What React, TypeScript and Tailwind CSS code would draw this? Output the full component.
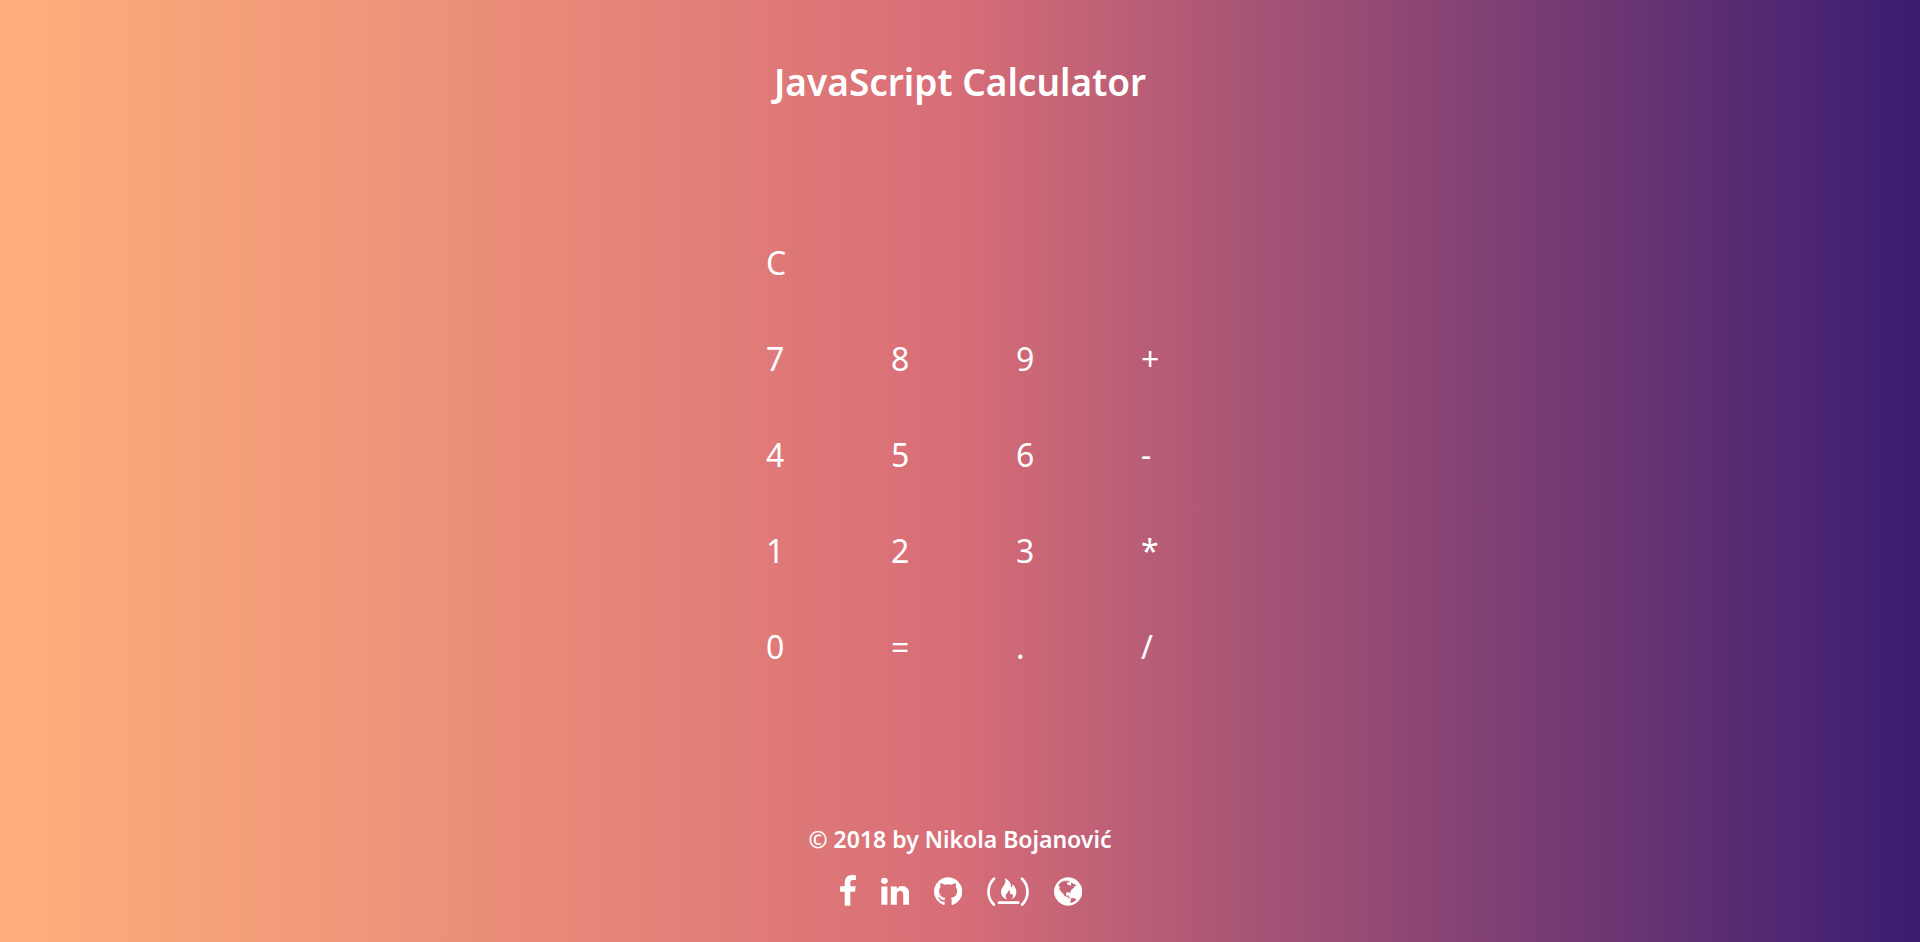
import type { ReactNode } from "react";

const keys = ["7", "8", "9", "+", "4", "5", "6", "-", "1", "2", "3", "*", "0", "=", ".", "/"];

const facebook =
  "M1343 12v264h-157q-86 0-116 36t-30 108v189h293l-39 296h-254v759h-306v-759h-255v-296h255v-218q0-186 104-288.5t277-102.5q147 0 228 12z";
const linkedin =
  "M477 625v991h-330v-991h330zm21-306q1 73-50.5 122t-135.5 49h-2q-82 0-132-49t-50-122q0-74 51.5-122.5t134.5-48.5 133 48.5 51 122.5zm1166 729v568h-329v-530q0-105-40.5-164.5t-126.5-59.5q-63 0-105.5 34.5t-63.5 85.5q-11 30-11 81v553h-329q2-399 2-647t-1-296l-1-48h329v144h-2q20-32 41-56t56.5-52 87-43.5 114.5-15.5q171 0 275 113.5t104 332.5z";
const github =
  "M896 128q209 0 385.5 103t279.5 279.5 103 385.5q0 251-146.5 451.5t-378.5 277.5q-27 5-40-7t-13-30q0-3 .5-76.5t.5-134.5q0-97-52-142 57-6 102.5-18t94-39 81-66.5 53-105 20.5-150.5q0-119-79-206 37-91-8-204-28-9-81 11t-92 44l-38 24q-93-26-192-26t-192 26q-16-11-42.5-27t-83.5-38.5-85-13.5q-45 113-8 204-79 87-79 206 0 85 20.5 150t52.5 105 80.5 67 94 39 102.5 18q-39 36-49 103-21 10-45 15t-57 5-65.5-21.5-55.5-62.5q-19-32-48.5-52t-49.5-24l-20-3q-21 0-29 4.5t-5 11.5 9 14 13 12l7 5q22 10 43.5 38t31.5 51l10 23q13 38 44 61.5t67 30 69.5 7 55.5-3.5l23-4q0 38 .5 88.5t.5 54.5q0 18-13 30t-40 7q-232-77-378.5-277.5t-146.5-451.5q0-209 103-385.5t279.5-279.5 385.5-103z";
const globe =
  "M896 128q209 0 385.5 103t279.5 279.5 103 385.5-103 385.5-279.5 279.5-385.5 103-385.5-103-279.5-279.5-103-385.5 103-385.5 279.5-279.5 385.5-103zm274 521q-2 1-9.5 9.5t-13.5 9.5q2 0 4.5-5t5-11 3.5-7q6-7 22-15 14-6 52-12 34-8 51 11-2-2 9.5-13t14.5-12q3-2 15-4.5t15-7.5l2-22q-12 1-17.5-7t-6.5-21q0 2-6 8 0-7-4.5-8t-11.5 1-9 1q-10-3-15-7.5t-8-16.5-4-15q-2-5-9.5-11t-9.5-10q-1-2-2.5-5.5t-3-6.5-4-5.5-5.5-2.5-7 5-7.5 10-4.5 5q-3-2-6-1.5t-4.5 1-4.5 3-5 3.5q-3 2-8.5 3t-8.5 2q15-5-1-11-10-4-16-3 9-4 7.5-12t-8.5-14h5q-1-4-8.5-8.5t-17.5-8.5-13-6q-8-5-34-9.5t-33-.5q-5 6-4.5 10.5t4 14 3.5 12.5q1 6-5.5 13t-6.5 12q0 7 14 15.5t10 21.5q-3 8-16 16t-16 12q-5 8-1.5 18.5t10.5 16.5q2 2 1.5 4t-3.5 4.5-5.5 4-6.5 3.5l-3 2q-11 5-20.5-6t-13.5-26q-7-25-16-30-23-8-29 1-5-13-41-26-25-9-58-4 6-1 0-15-7-15-19-12 3-6 4-17.5t1-13.5q3-13 12-23 1-1 7-8.5t9.5-13.5.5-6q35 4 50-11 5-5 11.5-17t10.5-17q9-6 14-5.5t14.5 5.5 14.5 5q14 1 15.5-11t-7.5-20q12 1 3-17-4-7-8-9-12-4-27 5-8 4 2 8-1-1-9.5 10.5t-16.5 17.5-16-5q-1-1-5.5-13.5t-9.5-13.5q-8 0-16 15 3-8-11-15t-24-8q19-12-8-27-7-4-20.5-5t-19.5 4q-5 7-5.5 11.5t5 8 10.5 5.5 11.5 4 8.5 3q14 10 8 14-2 1-8.5 3.5t-11.5 4.5-6 4q-3 4 0 14t-2 14q-5-5-9-17.5t-7-16.5q7 9-25 6l-10-1q-4 0-16 2t-20.5 1-13.5-8q-4-8 0-20 1-4 4-2-4-3-11-9.5t-10-8.5q-46 15-94 41 6 1 12-1 5-2 13-6.5t10-5.5q34-14 42-7l5-5q14 16 20 25-7-4-30-1-20 6-22 12 7 12 5 18-4-3-11.5-10t-14.5-11-15-5q-16 0-22 1-146 80-235 222 7 7 12 8 4 1 5 9t2.5 11 11.5-3q9 8 3 19 1-1 44 27 19 17 21 21 3 11-10 18-1-2-9-9t-9-4q-3 5 .5 18.5t10.5 12.5q-7 0-9.5 16t-2.5 35.5-1 23.5l2 1q-3 12 5.5 34.5t21.5 19.5q-13 3 20 43 6 8 8 9 3 2 12 7.5t15 10 10 10.5q4 5 10 22.5t14 23.5q-2 6 9.5 20t10.5 23q-1 0-2.5 1t-2.5 1q3 7 15.5 14t15.5 13q1 3 2 10t3 11 8 2q2-20-24-62-15-25-17-29-3-5-5.5-15.5t-4.5-14.5q2 0 6 1.5t8.5 3.5 7.5 4 2 3q-3 7 2 17.5t12 18.5 17 19 12 13q6 6 14 19.5t0 13.5q9 0 20 10t17 20q5 8 8 26t5 24q2 7 8.5 13.5t12.5 9.5l16 8 13 7q5 2 18.5 10.5t21.5 11.5q10 4 16 4t14.5-2.5 13.5-3.5q15-2 29 15t21 21q36 19 55 11-2 1 .5 7.5t8 15.5 9 14.5 5.5 8.5q5 6 18 15t18 15q6-4 7-9-3 8 7 20t18 10q14-3 14-32-31 15-49-18 0-1-2.5-5.5t-4-8.5-2.5-8.5 0-7.5 5-3q9 0 10-3.5t-2-12.5-4-13q-1-8-11-20t-12-15q-5 9-16 8t-16-9q0 1-1.5 5.5t-1.5 6.5q-13 0-15-1 1-3 2.5-17.5t3.5-22.5q1-4 5.5-12t7.5-14.5 4-12.5-4.5-9.5-17.5-2.5q-19 1-26 20-1 3-3 10.5t-5 11.5-9 7q-7 3-24 2t-24-5q-13-8-22.5-29t-9.5-37q0-10 2.5-26.5t3-25-5.5-24.5q3-2 9-9.5t10-10.5q2-1 4.5-1.5t4.5 0 4-1.5 3-6q-1-1-4-3-3-3-4-3 7 3 28.5-1.5t27.5 1.5q15 11 22-2 0-1-2.5-9.5t-.5-13.5q5 27 29 9 3 3 15.5 5t17.5 5q3 2 7 5.5t5.5 4.5 5-.5 8.5-6.5q10 14 12 24 11 40 19 44 7 3 11 2t4.5-9.5 0-14-1.5-12.5l-1-8v-18l-1-8q-15-3-18.5-12t1.5-18.5 15-18.5q1-1 8-3.5t15.5-6.5 12.5-8q21-19 15-35 7 0 11-9-1 0-5-3t-7.5-5-4.5-2q9-5 2-16 5-3 7.5-11t7.5-10q9 12 21 2 7-8 1-16 5-7 20.5-10.5t18.5-9.5q7 2 8-2t1-12 3-12q4-5 15-9t13-5l17-11q3-4 0-4 18 2 31-11 10-11-6-20 3-6-3-9.5t-15-5.5q3-1 11.5-.5t10.5-1.5q15-10-7-16-17-5-43 12zm-163 877q206-36 351-189-3-3-12.5-4.5t-12.5-3.5q-18-7-24-8 1-7-2.5-13t-8-9-12.5-8-11-7q-2-2-7-6t-7-5.5-7.5-4.5-8.5-2-10 1l-3 1q-3 1-5.5 2.5t-5.5 3-4 3 0 2.5q-21-17-36-22-5-1-11-5.5t-10.5-7-10-1.5-11.5 7q-5 5-6 15t-2 13q-7-5 0-17.5t2-18.5q-3-6-10.5-4.5t-12 4.5-11.5 8.5-9 6.5-8.5 5.5-8.5 7.5q-3 4-6 12t-5 11q-2-4-11.5-6.5t-9.5-5.5q2 10 4 35t5 38q7 31-12 48-27 25-29 40-4 22 12 26 0 7-8 20.5t-7 21.5q0 6 2 16z";
const flame =
  "M76 24C88 30 95 40 94 51C98 50 99 46 98 41C106 47 110 56 110 66C110 76 105 83 96 87C101 80 101 74 97 70C94 74 90 72 91 66C91 62 89 60 87 58C88 66 78 70 78 77C78 81 80 84 83 87C70 84 64 75 64 65C64 49 82 44 76 24z";

function Social({ label, children }: { label: string; children: ReactNode }) {
  return (
    <a href="#" aria-label={label} className="block">
      {children}
    </a>
  );
}

export default function App() {
  return (
    <div className="flex min-h-screen flex-col items-center bg-[linear-gradient(to_right,#ffaf7b,#d76d77,#3a1c71)] font-['Noto_Sans','Open_Sans',sans-serif] text-white">
      <h1 className="mt-14 text-[37px] leading-[52px] font-semibold">JavaScript Calculator</h1>
      <main className="mt-[107px] grid w-full max-w-[500px] grid-cols-4 text-[32px] leading-[96px]">
        <button className="col-span-4 pl-14 text-left">C</button>
        {keys.map((k) => (
          <button key={k} className="pl-14 text-left">
            {k}
          </button>
        ))}
      </main>
      <footer className="mt-auto flex flex-col items-center pb-[34px]">
        <p className="text-[23px] leading-8 font-semibold">© 2018 by Nikola Bojanović</p>
        <div className="mt-5 flex items-center gap-[25px] fill-white pl-0.5">
          <Social label="Facebook">
            <svg viewBox="479 0 864 1792" className="h-[33px]">
              <path d={facebook} />
            </svg>
          </Social>
          <Social label="LinkedIn">
            <svg viewBox="128 0 1536 1792" className="h-[33px]">
              <path d={linkedin} />
            </svg>
          </Social>
          <Social label="GitHub">
            <svg viewBox="128 0 1536 1792" className="h-[33px]">
              <path d={github} />
            </svg>
          </Social>
          <Social label="freeCodeCamp">
            <svg viewBox="22 14 126 99" className="h-[33px]">
              <g fill="none" stroke="white" strokeWidth="8" strokeLinecap="round">
                <path d="M43 25C21 46 21 82 43 103" />
                <path d="M127 25C149 46 149 82 127 103" />
                <path d="M58 97H116" />
              </g>
              <path d={flame} />
            </svg>
          </Social>
          <Social label="Website">
            <svg viewBox="128 0 1536 1792" className="h-[33px]">
              <path d={globe} />
            </svg>
          </Social>
        </div>
      </footer>
    </div>
  );
}
